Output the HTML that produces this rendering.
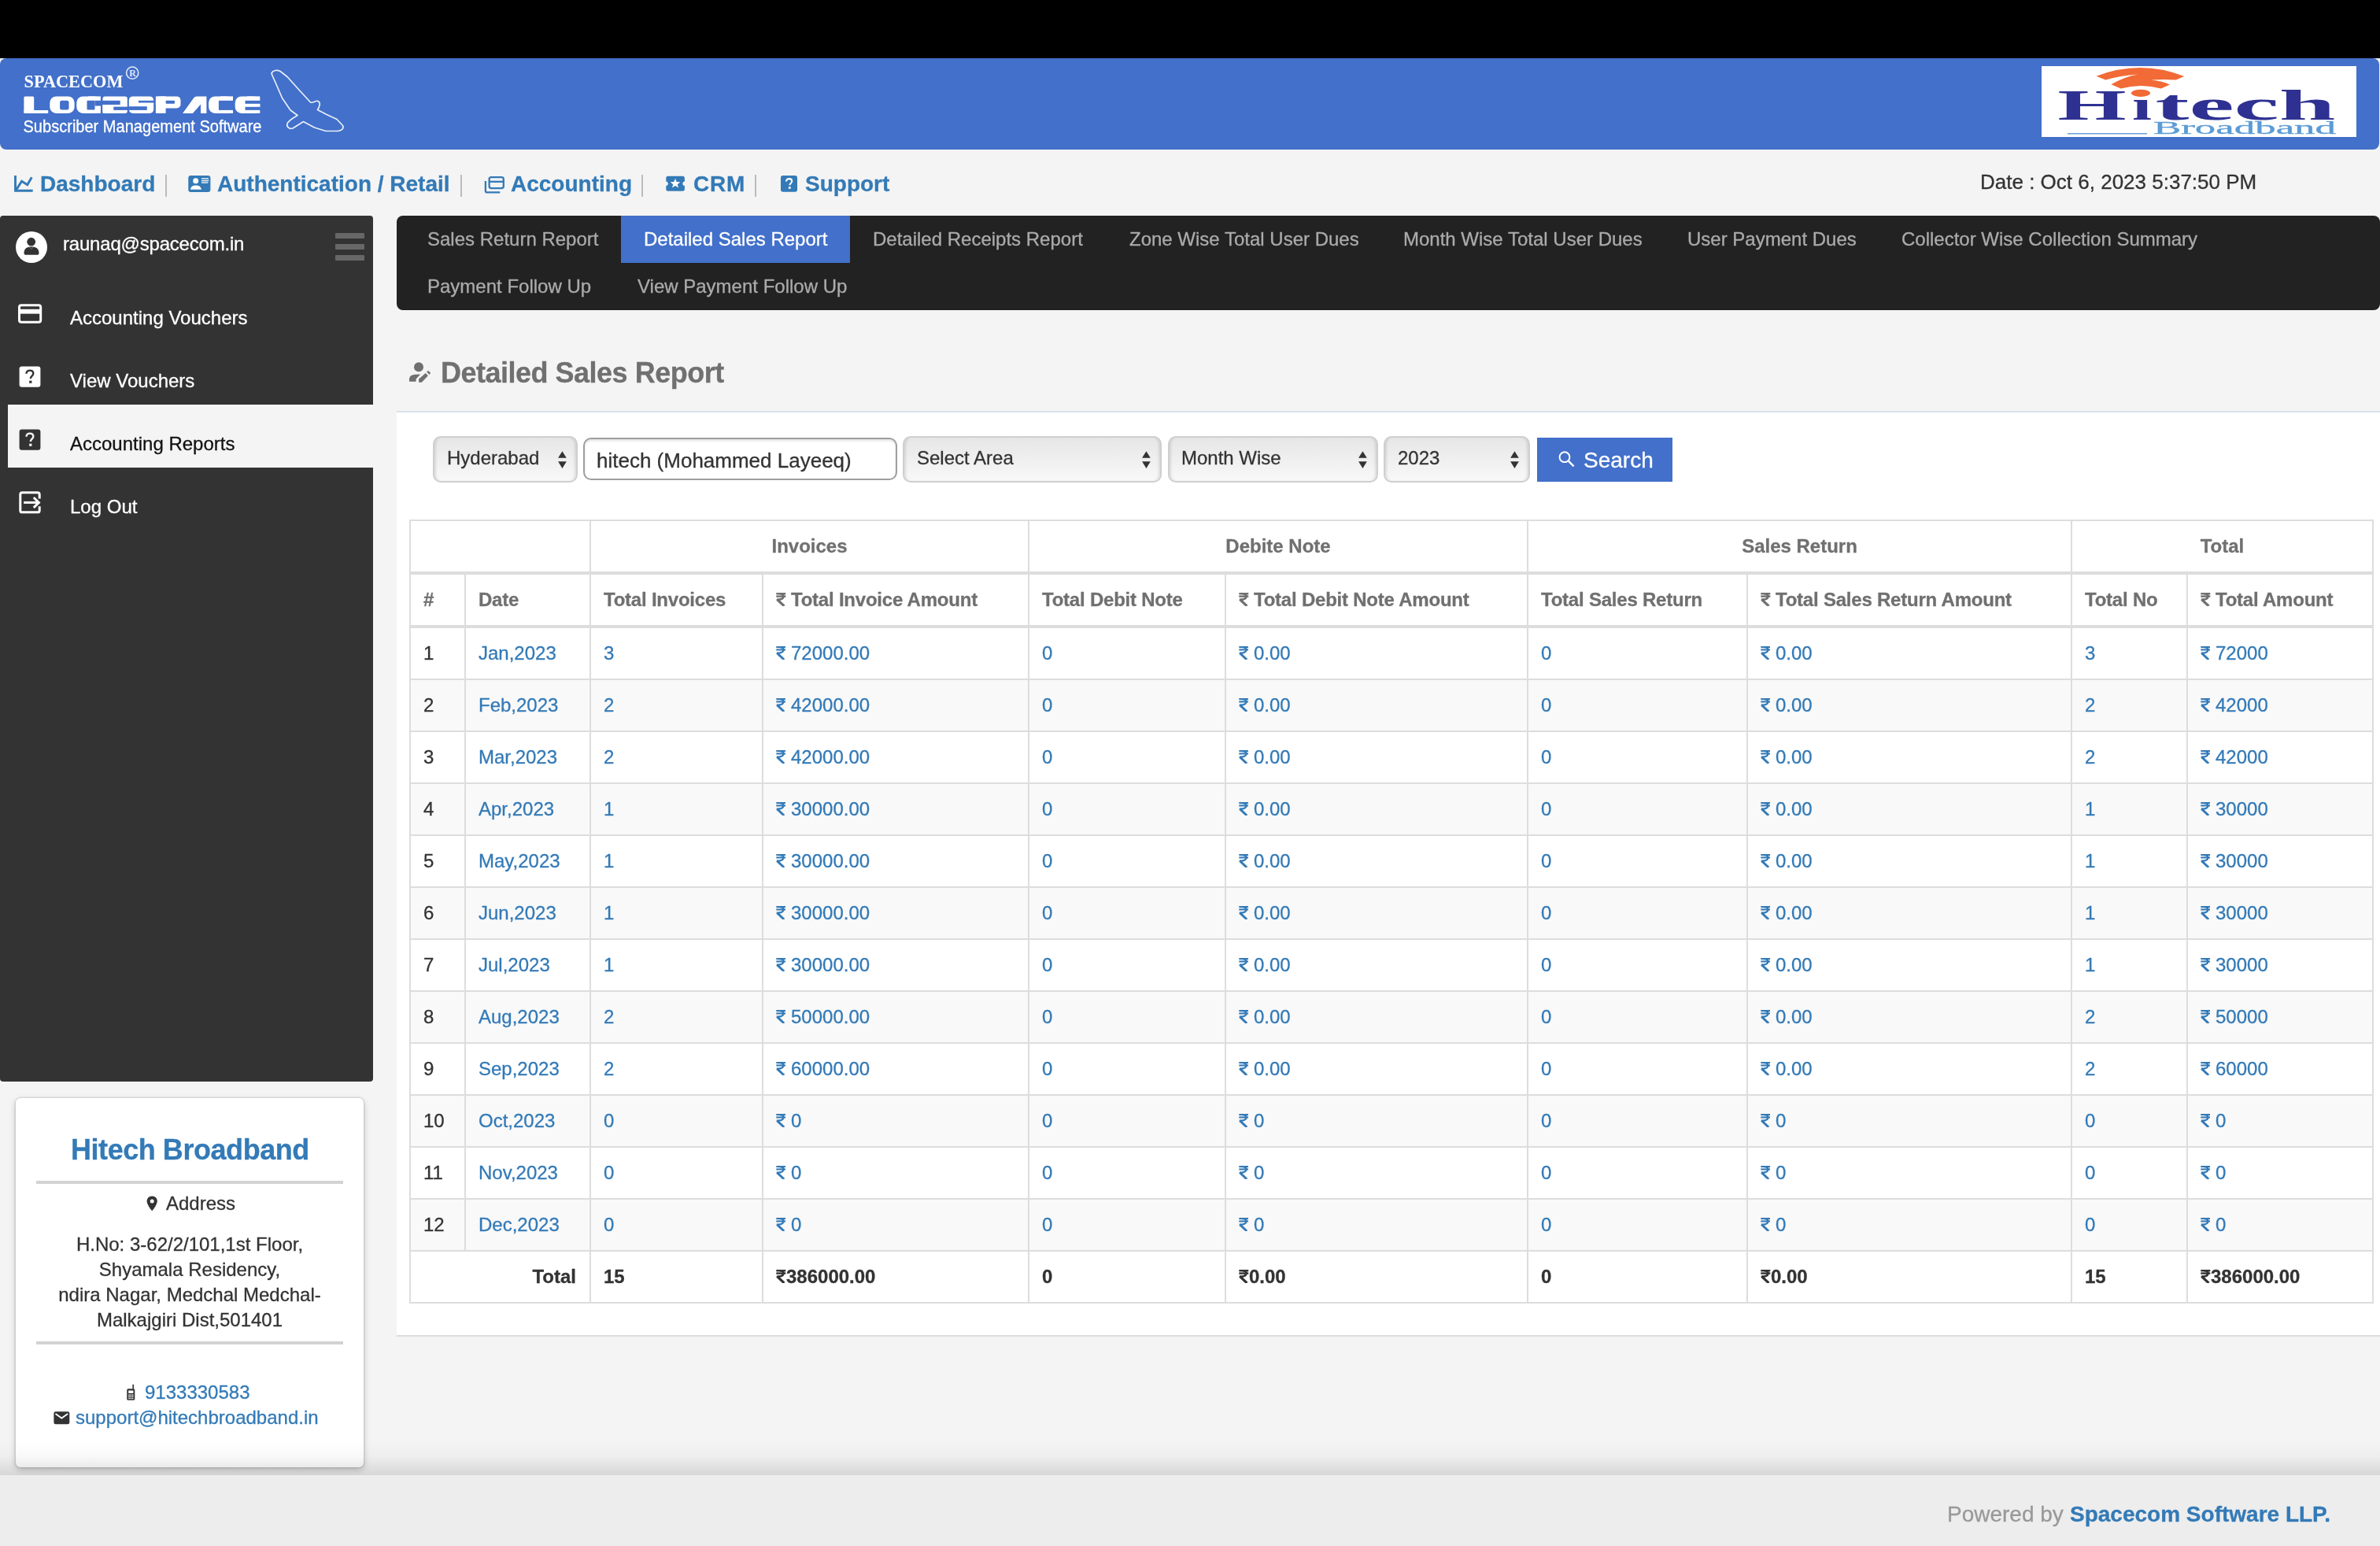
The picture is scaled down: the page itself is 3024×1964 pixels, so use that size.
<!DOCTYPE html>
<html><head><meta charset="utf-8"><title>Detailed Sales Report</title>
<style>
html,body{margin:0;padding:0;}
body{width:3024px;height:1964px;overflow:hidden;position:relative;background:#f4f4f4;font-family:"Liberation Sans", sans-serif;}
.t{position:absolute;white-space:nowrap;line-height:1;will-change:transform;-webkit-text-stroke:0.3px currentColor;}
.r{position:absolute;}
.s{position:absolute;overflow:visible;will-change:transform;}
.rs,.rsb{display:inline-block;width:13px;height:17px;vertical-align:0;margin-right:6px;}
</style></head><body>
<svg width="0" height="0" style="position:absolute">
<defs>
<symbol id="r" viewBox="0 0 13 17"><g fill="none" stroke="currentColor" stroke-linecap="butt">
<path d="M0.3 1.05H12" stroke-width="2.1"/><path d="M0.3 4.45H12" stroke-width="2.1"/>
<path d="M4.5 1.05C8.8 1.05 9.7 3.2 9.3 5.2C8.7 8 5.5 8.7 0.8 8.7" stroke-width="2.3"/>
<path d="M1.3 8.6L10.2 17" stroke-width="2.9"/></g></symbol>
<symbol id="rb" viewBox="0 0 13 17"><g fill="none" stroke="currentColor" stroke-linecap="butt">
<path d="M0.3 1.2H12.3" stroke-width="2.4"/><path d="M0.3 4.6H12.3" stroke-width="2.4"/>
<path d="M4.5 1.2C8.8 1.2 9.8 3.2 9.4 5.2C8.8 8 5.5 8.8 0.8 8.8" stroke-width="2.7"/>
<path d="M1.5 8.6L10.4 17" stroke-width="3.2"/></g></symbol>
</defs></svg>

<div class="r" style="left:0px;top:0px;width:3024px;height:74px;background:#000;"></div>
<div class="r" style="left:0px;top:74px;width:3023px;height:116px;background:#4270ca;border-radius:8px;"></div>
<svg class="s" style="left:0;top:74px" width="460" height="116" viewBox="0 74 460 116">
<g fill="#fff">
<text x="30.5" y="111.2" font-family="Liberation Serif" font-weight="bold" font-size="23.5" textLength="126" lengthAdjust="spacingAndGlyphs">SPACECOM</text>
</g><g fill="#fff">
<rect x="30.4" y="122.4" width="12.8" height="21.5" rx="1.5"/><rect x="30.4" y="139.9" width="30.9" height="4" rx="1"/>
<rect x="63.3" y="122.4" width="31.3" height="21.5" rx="8"/>
<rect x="97.3" y="122.4" width="30.6" height="21.5" rx="8"/><rect x="112" y="122.4" width="15.9" height="21.5"/>
<rect x="130.5" y="122.4" width="31.3" height="21.5" rx="3"/><rect x="130.5" y="131" width="10" height="12.9"/>
<rect x="163.8" y="122.4" width="31.4" height="21.5" rx="5"/>
<rect x="197.9" y="122.4" width="31.6" height="15" rx="5"/><rect x="197.9" y="122.4" width="12.7" height="21.5"/>
<path d="M232.1 143.9L246.5 124Q247.5 122.4 250 122.4H262.4V143.9H255V132.5L244.9 143.9Z"/>
<rect x="265.1" y="122.4" width="30.9" height="21.5" rx="8"/><rect x="280" y="122.4" width="16" height="21.5"/>
<rect x="298.7" y="122.4" width="31.6" height="21.5" rx="8"/><rect x="314" y="122.4" width="16.3" height="21.5"/>
</g><g fill="#4270ca">
<rect x="76.1" y="127.8" width="11.4" height="11.7" rx="2.5"/>
<rect x="110.5" y="127.8" width="10" height="11.7" rx="1"/><rect x="120.5" y="127.8" width="8" height="6.7"/>
<rect x="129.5" y="127.8" width="23.2" height="5.2"/><rect x="144.3" y="135.6" width="18.5" height="4.3"/>
<rect x="176" y="127.8" width="20" height="2.7"/><rect x="162.8" y="135.2" width="24" height="4.7"/>
<rect x="210.6" y="127.8" width="11.4" height="4" rx="1"/>
<rect x="277.9" y="127.8" width="19" height="12.1"/>
<rect x="311.5" y="127.8" width="19.5" height="4"/><rect x="311.5" y="135.8" width="19.5" height="4.1"/>
</g><g fill="#fff">
<text x="29.5" y="168" font-family="Liberation Sans" font-size="21.6" textLength="303" lengthAdjust="spacingAndGlyphs" stroke="#fff" stroke-width="0.3">Subscriber Management Software</text>
</g>
<circle cx="168.2" cy="92.6" r="7.6" fill="none" stroke="#fff" stroke-width="1.6" opacity="0.85"/>
<text x="164.2" y="97.3" font-family="Liberation Serif" font-weight="bold" font-size="12" fill="#fff" opacity="0.85">R</text>
<path d="M345,93 C347,89 352,88.5 356,90.5 L365,97.5 L378,112 L394.5,130 C398,131.5 401,127 404,128.5 C408,130.5 406,135.5 403.5,139.5 L415,145.5 L428,151.5 L435.5,159.5 C437.5,163.5 433.5,166 429,166.5 L414,166.5 L399.5,162 L385.5,154.5 L372,163 C368,164.5 363.5,161 365,157 C366.5,153 373,149.5 378,146.5 L369,140 L358.5,124.5 L350.5,106 L346,96 Z" fill="none" stroke="#fff" stroke-width="1.7" opacity="0.88" stroke-linejoin="round"/>
</svg>
<div class="r" style="left:2594px;top:84px;width:400px;height:90px;background:#fff;"></div>
<svg class="s" style="left:2594px;top:84px" width="400" height="90" viewBox="2594 84 400 90">
<path d="M2663.5 96.7Q2720 75.2 2775.3 97L2764.7 101.4Q2750 100.8 2733 101.4Q2748 103 2757 107.6L2745.9 112.6Q2720.6 105.4 2694.7 112.6L2682.4 107.3Q2700 97 2716.5 94.4Q2694 96 2675.3 101.4Z" fill="#f26a36"/>
<ellipse cx="2720" cy="118.3" rx="12" ry="4.6" fill="#f26a36"/>
<text x="2614.5" y="151.5" font-family="Liberation Serif" font-weight="bold" font-size="55" fill="#2e3192" textLength="87" lengthAdjust="spacingAndGlyphs">H</text>
<text x="2709" y="151.5" font-family="Liberation Serif" font-weight="bold" font-size="55" fill="#2e3192" textLength="25" lengthAdjust="spacingAndGlyphs">&#x131;</text>
<text x="2738.5" y="151.5" font-family="Liberation Serif" font-weight="bold" font-size="55" fill="#2e3192" textLength="229" lengthAdjust="spacingAndGlyphs">tech</text>
<text x="2736" y="170.4" font-family="Liberation Serif" font-size="23.5" fill="#5b9bd5" stroke="#5b9bd5" stroke-width="0.3" textLength="232" lengthAdjust="spacingAndGlyphs">Broadband</text>
<rect x="2627" y="169" width="101" height="1.5" fill="#6aa0d8"/>
</svg>
<svg class="s" style="left:14px;top:219px;" width="32" height="30" viewBox="0 0 32 30"><g fill="none" stroke="#337ab7" stroke-width="2.9" stroke-linejoin="miter"><path d="M5.5 4V23.2H27.7"/><path d="M6.7 22L13.6 11.3L20.8 15.7L26.3 6.3"/></g></svg>
<div class="t" style="left:50.50px;top:220.30px;font-size:28px;color:#337ab7;font-weight:bold;">Dashboard</div>
<div class="r" style="left:210px;top:221.5px;width:2px;height:28px;background:#bbb;"></div>
<svg class="s" style="left:239px;top:223px;" width="29" height="21" viewBox="0 0 29 21"><rect x="0.3" y="0" width="28.1" height="20.9" rx="3.2" fill="#337ab7"/><circle cx="9.7" cy="6.8" r="3.5" fill="#fff"/><path d="M2.8 17.8C3.5 13.5 6.5 12.4 9.8 12.4C13.1 12.4 16.2 13.5 17 17.8Z" fill="#fff"/><rect x="17" y="3.1" width="9" height="1.8" fill="#fff" opacity=".75"/><rect x="17" y="6" width="9.2" height="1.3" fill="#fff"/><rect x="17" y="8.3" width="8.3" height="1.5" fill="#fff" opacity=".85"/></svg>
<div class="t" style="left:275.80px;top:220.30px;font-size:28px;color:#337ab7;font-weight:bold;">Authentication / Retail</div>
<div class="r" style="left:585px;top:221.5px;width:2px;height:28px;background:#bbb;"></div>
<svg class="s" style="left:614px;top:222px;" width="30" height="25" viewBox="0 0 30 25"><g fill="none" stroke="#337ab7" stroke-width="2.3"><rect x="7.6" y="3.2" width="18.2" height="14" rx="2.6"/><path d="M7.6 8.8H25.8"/><path d="M2.9 8.1V20.4C2.9 21.6 3.7 22.4 4.9 22.4H21.3"/></g></svg>
<div class="t" style="left:648.50px;top:220.30px;font-size:28px;color:#337ab7;font-weight:bold;">Accounting</div>
<div class="r" style="left:815px;top:221.5px;width:2px;height:28px;background:#bbb;"></div>
<svg class="s" style="left:846px;top:223px;" width="25" height="21" viewBox="0 0 25 21"><path d="M2.5 0.8H21.5C22.9 0.8 23.9 1.8 23.9 3.2V7.4C22.3 7.6 21.3 8.7 21.3 10.2C21.3 11.7 22.3 12.8 23.9 13V17.3C23.9 18.7 22.9 19.7 21.5 19.7H2.5C1.1 19.7 0.3 18.7 0.3 17.3V13C1.9 12.8 2.9 11.7 2.9 10.2C2.9 8.7 1.9 7.6 0.3 7.4V3.2C0.3 1.8 1.1 0.8 2.5 0.8Z" fill="#337ab7"/><path d="M12 3.8L13.7 8.1L18.3 8.3L14.8 11.2L16 15.6L12 13.1L8 15.6L9.2 11.2L5.7 8.3L10.3 8.1Z" fill="#fff"/></svg>
<div class="t" style="left:880.50px;top:220.30px;font-size:28px;color:#337ab7;font-weight:bold;letter-spacing:0.8px;">CRM</div>
<div class="r" style="left:959px;top:221.5px;width:2px;height:28px;background:#bbb;"></div>
<svg class="s" style="left:992px;top:223px;" width="22" height="22" viewBox="0 0 22 22"><rect x="0" y="0" width="21" height="20.8" rx="2.8" fill="#337ab7"/><path d="M7 7.4C7 5.3 8.5 4.1 10.6 4.1C12.7 4.1 14.2 5.3 14.2 7.2C14.2 9.5 11.4 9.8 11.4 12.2" fill="none" stroke="#fff" stroke-width="2.1"/><rect x="9.9" y="14.2" width="2.8" height="2.6" fill="#fff"/></svg>
<div class="t" style="left:1023.00px;top:220.30px;font-size:28px;color:#337ab7;font-weight:bold;">Support</div>
<div class="t" style="left:2515.50px;top:217.99px;font-size:26px;color:#333;">Date : Oct 6, 2023 5:37:50 PM</div>
<div class="r" style="left:0px;top:274px;width:474px;height:1100px;background:#333;border-radius:4px;"></div>
<svg class="s" style="left:20px;top:294px;" width="40" height="40" viewBox="0 0 40 40"><circle cx="20" cy="20" r="20" fill="#fff"/><circle cx="19.7" cy="13.2" r="5.4" fill="#333"/><path d="M10.5 27.5C10.5 21.8 14.2 19.6 20 19.6C25.8 19.6 29.5 21.8 29.5 27.5C29.5 29 28.6 29.8 27 29.8H13C11.4 29.8 10.5 29 10.5 27.5Z" fill="#333"/><path d="M17 19.6L19.8 22.6L22.6 19.6" fill="none" stroke="#888" stroke-width="0.7"/></svg>
<div class="t" style="left:79.50px;top:297.58px;font-size:24px;color:#fff;letter-spacing:-0.2px;">raunaq@spacecom.in</div>
<div class="r" style="left:425.5px;top:295.5px;width:37px;height:7px;background:#676767;border-radius:1px;"></div>
<div class="r" style="left:425.5px;top:309.5px;width:37px;height:7px;background:#676767;border-radius:1px;"></div>
<div class="r" style="left:425.5px;top:323.5px;width:37px;height:7px;background:#676767;border-radius:1px;"></div>
<div class="t" style="left:88.80px;top:391.68px;font-size:24px;color:#fff;">Accounting Vouchers</div>
<div class="t" style="left:88.80px;top:471.68px;font-size:24px;color:#fff;">View Vouchers</div>
<div class="r" style="left:10px;top:514px;width:464px;height:80px;background:#f4f4f4;"></div>
<div class="t" style="left:88.80px;top:551.68px;font-size:24px;color:#111;">Accounting Reports</div>
<div class="t" style="left:88.80px;top:631.68px;font-size:24px;color:#fff;">Log Out</div>
<svg class="s" style="left:23px;top:386px;" width="31" height="25" viewBox="0 0 31 25"><g fill="none" stroke="#fff" stroke-width="3"><rect x="1.5" y="1.8" width="27.2" height="21.5" rx="2.6"/></g><rect x="2" y="6.8" width="26.5" height="5.8" fill="#fff"/></svg>
<svg class="s" style="left:24px;top:465px;" width="28" height="27" viewBox="0 0 28 27"><rect x="0.6" y="0.4" width="26.8" height="26.4" rx="3" fill="#fff"/><path d="M9.5 9.8C9.5 7.2 11.3 5.6 13.9 5.6C16.5 5.6 18.3 7.1 18.3 9.4C18.3 12.4 14.8 12.7 14.8 16" fill="none" stroke="#333" stroke-width="2.4"/><rect x="13.2" y="18.6" width="3.2" height="3.2" fill="#333"/></svg>
<svg class="s" style="left:24px;top:545px;" width="28" height="27" viewBox="0 0 28 27"><rect x="0.6" y="0.4" width="26.8" height="26.4" rx="3" fill="#333"/><path d="M9.5 9.8C9.5 7.2 11.3 5.6 13.9 5.6C16.5 5.6 18.3 7.1 18.3 9.4C18.3 12.4 14.8 12.7 14.8 16" fill="none" stroke="#f4f4f4" stroke-width="2.4"/><rect x="13.2" y="18.6" width="3.2" height="3.2" fill="#f4f4f4"/></svg>
<svg class="s" style="left:24px;top:624px;" width="29" height="29" viewBox="0 0 29 29"><g fill="none" stroke="#fff" stroke-width="3"><path d="M26.2 9.4V4.2C26.2 2.6 25.4 1.8 23.8 1.8H4.2C2.6 1.8 1.8 2.6 1.8 4.2V24.4C1.8 26 2.6 26.8 4.2 26.8H23.8C25.4 26.8 26.2 26 26.2 24.4V19.2"/><path d="M6.2 14.4H25.2"/><path d="M18.8 8L25.4 14.4L18.8 20.8"/></g></svg>
<div class="r" style="left:20px;top:1395px;width:442px;height:469px;background:#fff;border-radius:6px;box-shadow:0 0 0 1.5px rgba(0,0,0,0.07),0 3px 8px rgba(0,0,0,0.22);"></div>
<div class="t" style="left:89.50px;top:1443.03px;font-size:36px;color:#337ab7;font-weight:bold;letter-spacing:-0.45px;">Hitech Broadband</div>
<div class="r" style="left:46px;top:1500px;width:390px;height:4px;background:#d3d3d3;"></div>
<svg class="s" style="left:186px;top:1519px;" width="15" height="20" viewBox="0 0 15 20"><path d="M7.2 0.6C3.5 0.6 0.6 3.4 0.6 7C0.6 11.5 7.2 19.4 7.2 19.4C7.2 19.4 13.8 11.5 13.8 7C13.8 3.4 10.9 0.6 7.2 0.6Z" fill="#333"/><circle cx="7.2" cy="6.9" r="2.5" fill="#fff"/></svg>
<div class="t" style="left:211.00px;top:1517.38px;font-size:24px;color:#333;">Address</div>
<div class="t" style="left:20px;width:442px;text-align:center;top:1569.08px;font-size:24px;color:#333;">H.No: 3-62/2/101,1st Floor,</div>
<div class="t" style="left:20px;width:442px;text-align:center;top:1601.08px;font-size:24px;color:#333;">Shyamala Residency,</div>
<div class="t" style="left:20px;width:442px;text-align:center;top:1633.08px;font-size:24px;color:#333;">ndira Nagar, Medchal Medchal-</div>
<div class="t" style="left:20px;width:442px;text-align:center;top:1665.08px;font-size:24px;color:#333;">Malkajgiri Dist,501401</div>
<div class="r" style="left:46px;top:1704px;width:390px;height:4px;background:#d3d3d3;"></div>
<svg class="s" style="left:160px;top:1758px;" width="13" height="22" viewBox="0 0 13 22"><rect x="1.3" y="6.2" width="10" height="14.6" rx="1.6" fill="#333"/><rect x="8.4" y="0.8" width="1.6" height="6" fill="#333"/><g fill="#fff"><rect x="3.2" y="8.5" width="6.2" height="3.4"/><rect x="3.2" y="13.4" width="1.6" height="1.4"/><rect x="5.5" y="13.4" width="1.6" height="1.4"/><rect x="7.8" y="13.4" width="1.6" height="1.4"/><rect x="3.2" y="15.6" width="1.6" height="1.4"/><rect x="5.5" y="15.6" width="1.6" height="1.4"/><rect x="7.8" y="15.6" width="1.6" height="1.4"/><rect x="3.2" y="17.8" width="1.6" height="1.4"/><rect x="5.5" y="17.8" width="1.6" height="1.4"/><rect x="7.8" y="17.8" width="1.6" height="1.4"/></g></svg>
<div class="t" style="left:183.50px;top:1757.18px;font-size:24px;color:#337ab7;">9133330583</div>
<svg class="s" style="left:68px;top:1793px;" width="21" height="17" viewBox="0 0 21 17"><rect x="0.4" y="0.3" width="19.9" height="15.9" rx="2.2" fill="#333"/><path d="M2.5 3L10.35 8.6L18.2 3" fill="none" stroke="#fff" stroke-width="1.8"/></svg>
<div class="t" style="left:96.00px;top:1789.18px;font-size:24px;color:#337ab7;">support@hitechbroadband.in</div>
<div class="r" style="left:0px;top:1830px;width:3024px;height:44px;background:linear-gradient(to bottom, rgba(0,0,0,0) 0%, rgba(0,0,0,0.025) 45%, rgba(0,0,0,0.12) 100%);"></div>
<div class="r" style="left:0px;top:1874px;width:3024px;height:90px;background:#ededed;"></div>
<div class="t" style="left:2474.00px;top:1910.30px;font-size:28px;color:#999;">Powered by </div>
<div class="t" style="left:2629.70px;top:1910.30px;font-size:28px;color:#337ab7;font-weight:bold;">Spacecom Software LLP.</div>
<div class="r" style="left:504px;top:274px;width:2520px;height:120px;background:#222;border-radius:8px;"></div>
<div class="r" style="left:789px;top:274px;width:291px;height:60px;background:#4270ca;"></div>
<div class="t" style="left:543.00px;top:291.68px;font-size:24px;color:#ababab;">Sales Return Report</div>
<div class="t" style="left:818.00px;top:291.68px;font-size:24px;color:#fff;">Detailed Sales Report</div>
<div class="t" style="left:1109.00px;top:291.68px;font-size:24px;color:#ababab;">Detailed Receipts Report</div>
<div class="t" style="left:1435.00px;top:291.68px;font-size:24px;color:#ababab;">Zone Wise Total User Dues</div>
<div class="t" style="left:1782.50px;top:291.68px;font-size:24px;color:#ababab;">Month Wise Total User Dues</div>
<div class="t" style="left:2144.00px;top:291.68px;font-size:24px;color:#ababab;">User Payment Dues</div>
<div class="t" style="left:2416.00px;top:291.68px;font-size:24px;color:#ababab;">Collector Wise Collection Summary</div>
<div class="t" style="left:543.00px;top:351.68px;font-size:24px;color:#ababab;">Payment Follow Up</div>
<div class="t" style="left:810.00px;top:351.68px;font-size:24px;color:#ababab;">View Payment Follow Up</div>
<svg class="s" style="left:518px;top:458px;" width="32" height="30" viewBox="0 0 32 30"><circle cx="14" cy="8.2" r="6" fill="#707070"/><path d="M1.9 26.8L2.1 22.5C2.8 19.5 5.5 17.9 9.5 17.7L16.2 17.6L10.6 23.6V26.8Z" fill="#707070"/><path d="M14.1 23.6V27.8H17.8L25.9 19.3L22.7 16.1Z" fill="#707070"/><path d="M24 14.2L26.4 13.1L29.1 15.7L27.6 17.9Z" fill="#707070"/></svg>
<div class="t" style="left:559.50px;top:455.83px;font-size:36px;color:#707070;font-weight:bold;letter-spacing:-0.5px;">Detailed Sales Report</div>
<div class="r" style="left:504px;top:522px;width:2520px;height:1176px;background:#fff;border-top:2px solid #d8e2ee;border-bottom:2px solid #ddd;box-sizing:border-box;"></div>
<div class="r" style="left:550px;top:554px;width:184px;height:59px;box-sizing:border-box;border:2px solid #cfcfcf;border-radius:10px;background:linear-gradient(#e6e6e6,#f3f3f3 70%,#f8f8f8);box-shadow:inset 4px 0 3px -2px rgba(0,0,0,0.10),inset -4px 0 3px -2px rgba(0,0,0,0.10);"></div>
<div class="t" style="left:567.50px;top:570.38px;font-size:24px;color:#333;">Hyderabad</div>
<svg class="s" style="left:709px;top:572px;" width="12" height="24" viewBox="0 0 12 24"><path d="M0.1 9.8L5.45 1.2L10.8 9.8Z" fill="#333"/><path d="M0.1 14.2L5.45 22.9L10.8 14.2Z" fill="#333"/></svg>
<div class="r" style="left:741px;top:556px;width:399px;height:54px;box-sizing:border-box;border:2px solid #9e9e9e;border-radius:10px;background:#fff;box-shadow:inset 0 2px 3px rgba(0,0,0,0.12);"></div>
<div class="t" style="left:757.50px;top:571.99px;font-size:26px;color:#333;">hitech (Mohammed Layeeq)</div>
<div class="r" style="left:1147px;top:554px;width:329px;height:59px;box-sizing:border-box;border:2px solid #cfcfcf;border-radius:10px;background:linear-gradient(#e6e6e6,#f3f3f3 70%,#f8f8f8);box-shadow:inset 4px 0 3px -2px rgba(0,0,0,0.10),inset -4px 0 3px -2px rgba(0,0,0,0.10);"></div>
<div class="t" style="left:1164.50px;top:570.38px;font-size:24px;color:#333;">Select Area</div>
<svg class="s" style="left:1451px;top:572px;" width="12" height="24" viewBox="0 0 12 24"><path d="M0.1 9.8L5.45 1.2L10.8 9.8Z" fill="#333"/><path d="M0.1 14.2L5.45 22.9L10.8 14.2Z" fill="#333"/></svg>
<div class="r" style="left:1484px;top:554px;width:267px;height:59px;box-sizing:border-box;border:2px solid #cfcfcf;border-radius:10px;background:linear-gradient(#e6e6e6,#f3f3f3 70%,#f8f8f8);box-shadow:inset 4px 0 3px -2px rgba(0,0,0,0.10),inset -4px 0 3px -2px rgba(0,0,0,0.10);"></div>
<div class="t" style="left:1501.00px;top:570.38px;font-size:24px;color:#333;">Month Wise</div>
<svg class="s" style="left:1726px;top:572px;" width="12" height="24" viewBox="0 0 12 24"><path d="M0.1 9.8L5.45 1.2L10.8 9.8Z" fill="#333"/><path d="M0.1 14.2L5.45 22.9L10.8 14.2Z" fill="#333"/></svg>
<div class="r" style="left:1758px;top:554px;width:186px;height:59px;box-sizing:border-box;border:2px solid #cfcfcf;border-radius:10px;background:linear-gradient(#e6e6e6,#f3f3f3 70%,#f8f8f8);box-shadow:inset 4px 0 3px -2px rgba(0,0,0,0.10),inset -4px 0 3px -2px rgba(0,0,0,0.10);"></div>
<div class="t" style="left:1775.50px;top:570.38px;font-size:24px;color:#333;">2023</div>
<svg class="s" style="left:1919px;top:572px;" width="12" height="24" viewBox="0 0 12 24"><path d="M0.1 9.8L5.45 1.2L10.8 9.8Z" fill="#333"/><path d="M0.1 14.2L5.45 22.9L10.8 14.2Z" fill="#333"/></svg>
<div class="r" style="left:1953px;top:556px;width:172px;height:56px;background:#4270ca;"></div>
<svg class="s" style="left:1978px;top:570px;" width="26" height="26" viewBox="0 0 26 26"><circle cx="10" cy="10.7" r="6.4" fill="none" stroke="#fff" stroke-width="2"/><path d="M14.6 15.4L21.6 22.4" stroke="#fff" stroke-width="2.4"/></svg>
<div class="t" style="left:2011.50px;top:570.50px;font-size:28px;color:#fff;">Search</div>
<div class="r" style="left:522px;top:864px;width:2492px;height:64px;background:#f9f9f9;"></div>
<div class="r" style="left:522px;top:996px;width:2492px;height:64px;background:#f9f9f9;"></div>
<div class="r" style="left:522px;top:1128px;width:2492px;height:64px;background:#f9f9f9;"></div>
<div class="r" style="left:522px;top:1260px;width:2492px;height:64px;background:#f9f9f9;"></div>
<div class="r" style="left:522px;top:1392px;width:2492px;height:64px;background:#f9f9f9;"></div>
<div class="r" style="left:522px;top:1524px;width:2492px;height:64px;background:#f9f9f9;"></div>
<div class="r" style="left:520px;top:660px;width:2496px;height:2px;background:#dddddd;"></div>
<div class="r" style="left:520px;top:726px;width:2496px;height:4px;background:#dddddd;"></div>
<div class="r" style="left:520px;top:794px;width:2496px;height:4px;background:#dddddd;"></div>
<div class="r" style="left:520px;top:862px;width:2496px;height:2px;background:#dddddd;"></div>
<div class="r" style="left:520px;top:928px;width:2496px;height:2px;background:#dddddd;"></div>
<div class="r" style="left:520px;top:994px;width:2496px;height:2px;background:#dddddd;"></div>
<div class="r" style="left:520px;top:1060px;width:2496px;height:2px;background:#dddddd;"></div>
<div class="r" style="left:520px;top:1126px;width:2496px;height:2px;background:#dddddd;"></div>
<div class="r" style="left:520px;top:1192px;width:2496px;height:2px;background:#dddddd;"></div>
<div class="r" style="left:520px;top:1258px;width:2496px;height:2px;background:#dddddd;"></div>
<div class="r" style="left:520px;top:1324px;width:2496px;height:2px;background:#dddddd;"></div>
<div class="r" style="left:520px;top:1390px;width:2496px;height:2px;background:#dddddd;"></div>
<div class="r" style="left:520px;top:1456px;width:2496px;height:2px;background:#dddddd;"></div>
<div class="r" style="left:520px;top:1522px;width:2496px;height:2px;background:#dddddd;"></div>
<div class="r" style="left:520px;top:1588px;width:2496px;height:2px;background:#dddddd;"></div>
<div class="r" style="left:520px;top:1654px;width:2496px;height:2px;background:#dddddd;"></div>
<div class="r" style="left:520px;top:660px;width:2px;height:996px;background:#dddddd;"></div>
<div class="r" style="left:3014px;top:660px;width:2px;height:996px;background:#dddddd;"></div>
<div class="r" style="left:749px;top:660px;width:2px;height:996px;background:#dddddd;"></div>
<div class="r" style="left:1306px;top:660px;width:2px;height:996px;background:#dddddd;"></div>
<div class="r" style="left:1940px;top:660px;width:2px;height:996px;background:#dddddd;"></div>
<div class="r" style="left:2631px;top:660px;width:2px;height:996px;background:#dddddd;"></div>
<div class="r" style="left:590px;top:726px;width:2px;height:864px;background:#dddddd;"></div>
<div class="r" style="left:968px;top:726px;width:2px;height:864px;background:#dddddd;"></div>
<div class="r" style="left:1556px;top:726px;width:2px;height:864px;background:#dddddd;"></div>
<div class="r" style="left:2219px;top:726px;width:2px;height:864px;background:#dddddd;"></div>
<div class="r" style="left:2778px;top:726px;width:2px;height:864px;background:#dddddd;"></div>
<div class="r" style="left:968px;top:1590px;width:2px;height:66px;background:#dddddd;"></div>
<div class="r" style="left:1556px;top:1590px;width:2px;height:66px;background:#dddddd;"></div>
<div class="r" style="left:2219px;top:1590px;width:2px;height:66px;background:#dddddd;"></div>
<div class="r" style="left:2778px;top:1590px;width:2px;height:66px;background:#dddddd;"></div>
<div class="t" style="left:750px;width:557px;text-align:center;top:681.68px;font-size:24px;font-weight:bold;color:#707070;">Invoices</div>
<div class="t" style="left:1307px;width:634px;text-align:center;top:681.68px;font-size:24px;font-weight:bold;color:#707070;">Debite Note</div>
<div class="t" style="left:1941px;width:691px;text-align:center;top:681.68px;font-size:24px;font-weight:bold;color:#707070;">Sales Return</div>
<div class="t" style="left:2632px;width:383px;text-align:center;top:681.68px;font-size:24px;font-weight:bold;color:#707070;">Total</div>
<div class="t" style="left:538px;top:749.98px;font-size:24px;color:#707070;font-weight:bold;letter-spacing:-0.22px;">#</div>
<div class="t" style="left:608px;top:749.98px;font-size:24px;color:#707070;font-weight:bold;letter-spacing:-0.22px;">Date</div>
<div class="t" style="left:767px;top:749.98px;font-size:24px;color:#707070;font-weight:bold;letter-spacing:-0.22px;">Total Invoices</div>
<div class="t" style="left:986px;top:749.98px;font-size:24px;color:#707070;font-weight:bold;letter-spacing:-0.22px;"><svg class="rsb" viewBox="0 0 13 17"><use href="#rb"/></svg>Total Invoice Amount</div>
<div class="t" style="left:1324px;top:749.98px;font-size:24px;color:#707070;font-weight:bold;letter-spacing:-0.22px;">Total Debit Note</div>
<div class="t" style="left:1574px;top:749.98px;font-size:24px;color:#707070;font-weight:bold;letter-spacing:-0.22px;"><svg class="rsb" viewBox="0 0 13 17"><use href="#rb"/></svg>Total Debit Note Amount</div>
<div class="t" style="left:1958px;top:749.98px;font-size:24px;color:#707070;font-weight:bold;letter-spacing:-0.22px;">Total Sales Return</div>
<div class="t" style="left:2237px;top:749.98px;font-size:24px;color:#707070;font-weight:bold;letter-spacing:-0.22px;"><svg class="rsb" viewBox="0 0 13 17"><use href="#rb"/></svg>Total Sales Return Amount</div>
<div class="t" style="left:2649px;top:749.98px;font-size:24px;color:#707070;font-weight:bold;letter-spacing:-0.22px;">Total No</div>
<div class="t" style="left:2796px;top:749.98px;font-size:24px;color:#707070;font-weight:bold;letter-spacing:-0.22px;"><svg class="rsb" viewBox="0 0 13 17"><use href="#rb"/></svg>Total Amount</div>
<div class="t" style="left:538px;top:817.68px;font-size:24px;color:#333;">1</div>
<div class="t" style="left:608px;top:817.68px;font-size:24px;color:#337ab7;">Jan,2023</div>
<div class="t" style="left:767px;top:817.68px;font-size:24px;color:#337ab7;">3</div>
<div class="t" style="left:986px;top:817.68px;font-size:24px;color:#337ab7;"><svg class="rs" viewBox="0 0 13 17"><use href="#r"/></svg>72000.00</div>
<div class="t" style="left:1324px;top:817.68px;font-size:24px;color:#337ab7;">0</div>
<div class="t" style="left:1574px;top:817.68px;font-size:24px;color:#337ab7;"><svg class="rs" viewBox="0 0 13 17"><use href="#r"/></svg>0.00</div>
<div class="t" style="left:1958px;top:817.68px;font-size:24px;color:#337ab7;">0</div>
<div class="t" style="left:2237px;top:817.68px;font-size:24px;color:#337ab7;"><svg class="rs" viewBox="0 0 13 17"><use href="#r"/></svg>0.00</div>
<div class="t" style="left:2649px;top:817.68px;font-size:24px;color:#337ab7;">3</div>
<div class="t" style="left:2796px;top:817.68px;font-size:24px;color:#337ab7;"><svg class="rs" viewBox="0 0 13 17"><use href="#r"/></svg>72000</div>
<div class="t" style="left:538px;top:883.68px;font-size:24px;color:#333;">2</div>
<div class="t" style="left:608px;top:883.68px;font-size:24px;color:#337ab7;">Feb,2023</div>
<div class="t" style="left:767px;top:883.68px;font-size:24px;color:#337ab7;">2</div>
<div class="t" style="left:986px;top:883.68px;font-size:24px;color:#337ab7;"><svg class="rs" viewBox="0 0 13 17"><use href="#r"/></svg>42000.00</div>
<div class="t" style="left:1324px;top:883.68px;font-size:24px;color:#337ab7;">0</div>
<div class="t" style="left:1574px;top:883.68px;font-size:24px;color:#337ab7;"><svg class="rs" viewBox="0 0 13 17"><use href="#r"/></svg>0.00</div>
<div class="t" style="left:1958px;top:883.68px;font-size:24px;color:#337ab7;">0</div>
<div class="t" style="left:2237px;top:883.68px;font-size:24px;color:#337ab7;"><svg class="rs" viewBox="0 0 13 17"><use href="#r"/></svg>0.00</div>
<div class="t" style="left:2649px;top:883.68px;font-size:24px;color:#337ab7;">2</div>
<div class="t" style="left:2796px;top:883.68px;font-size:24px;color:#337ab7;"><svg class="rs" viewBox="0 0 13 17"><use href="#r"/></svg>42000</div>
<div class="t" style="left:538px;top:949.68px;font-size:24px;color:#333;">3</div>
<div class="t" style="left:608px;top:949.68px;font-size:24px;color:#337ab7;">Mar,2023</div>
<div class="t" style="left:767px;top:949.68px;font-size:24px;color:#337ab7;">2</div>
<div class="t" style="left:986px;top:949.68px;font-size:24px;color:#337ab7;"><svg class="rs" viewBox="0 0 13 17"><use href="#r"/></svg>42000.00</div>
<div class="t" style="left:1324px;top:949.68px;font-size:24px;color:#337ab7;">0</div>
<div class="t" style="left:1574px;top:949.68px;font-size:24px;color:#337ab7;"><svg class="rs" viewBox="0 0 13 17"><use href="#r"/></svg>0.00</div>
<div class="t" style="left:1958px;top:949.68px;font-size:24px;color:#337ab7;">0</div>
<div class="t" style="left:2237px;top:949.68px;font-size:24px;color:#337ab7;"><svg class="rs" viewBox="0 0 13 17"><use href="#r"/></svg>0.00</div>
<div class="t" style="left:2649px;top:949.68px;font-size:24px;color:#337ab7;">2</div>
<div class="t" style="left:2796px;top:949.68px;font-size:24px;color:#337ab7;"><svg class="rs" viewBox="0 0 13 17"><use href="#r"/></svg>42000</div>
<div class="t" style="left:538px;top:1015.68px;font-size:24px;color:#333;">4</div>
<div class="t" style="left:608px;top:1015.68px;font-size:24px;color:#337ab7;">Apr,2023</div>
<div class="t" style="left:767px;top:1015.68px;font-size:24px;color:#337ab7;">1</div>
<div class="t" style="left:986px;top:1015.68px;font-size:24px;color:#337ab7;"><svg class="rs" viewBox="0 0 13 17"><use href="#r"/></svg>30000.00</div>
<div class="t" style="left:1324px;top:1015.68px;font-size:24px;color:#337ab7;">0</div>
<div class="t" style="left:1574px;top:1015.68px;font-size:24px;color:#337ab7;"><svg class="rs" viewBox="0 0 13 17"><use href="#r"/></svg>0.00</div>
<div class="t" style="left:1958px;top:1015.68px;font-size:24px;color:#337ab7;">0</div>
<div class="t" style="left:2237px;top:1015.68px;font-size:24px;color:#337ab7;"><svg class="rs" viewBox="0 0 13 17"><use href="#r"/></svg>0.00</div>
<div class="t" style="left:2649px;top:1015.68px;font-size:24px;color:#337ab7;">1</div>
<div class="t" style="left:2796px;top:1015.68px;font-size:24px;color:#337ab7;"><svg class="rs" viewBox="0 0 13 17"><use href="#r"/></svg>30000</div>
<div class="t" style="left:538px;top:1081.68px;font-size:24px;color:#333;">5</div>
<div class="t" style="left:608px;top:1081.68px;font-size:24px;color:#337ab7;">May,2023</div>
<div class="t" style="left:767px;top:1081.68px;font-size:24px;color:#337ab7;">1</div>
<div class="t" style="left:986px;top:1081.68px;font-size:24px;color:#337ab7;"><svg class="rs" viewBox="0 0 13 17"><use href="#r"/></svg>30000.00</div>
<div class="t" style="left:1324px;top:1081.68px;font-size:24px;color:#337ab7;">0</div>
<div class="t" style="left:1574px;top:1081.68px;font-size:24px;color:#337ab7;"><svg class="rs" viewBox="0 0 13 17"><use href="#r"/></svg>0.00</div>
<div class="t" style="left:1958px;top:1081.68px;font-size:24px;color:#337ab7;">0</div>
<div class="t" style="left:2237px;top:1081.68px;font-size:24px;color:#337ab7;"><svg class="rs" viewBox="0 0 13 17"><use href="#r"/></svg>0.00</div>
<div class="t" style="left:2649px;top:1081.68px;font-size:24px;color:#337ab7;">1</div>
<div class="t" style="left:2796px;top:1081.68px;font-size:24px;color:#337ab7;"><svg class="rs" viewBox="0 0 13 17"><use href="#r"/></svg>30000</div>
<div class="t" style="left:538px;top:1147.68px;font-size:24px;color:#333;">6</div>
<div class="t" style="left:608px;top:1147.68px;font-size:24px;color:#337ab7;">Jun,2023</div>
<div class="t" style="left:767px;top:1147.68px;font-size:24px;color:#337ab7;">1</div>
<div class="t" style="left:986px;top:1147.68px;font-size:24px;color:#337ab7;"><svg class="rs" viewBox="0 0 13 17"><use href="#r"/></svg>30000.00</div>
<div class="t" style="left:1324px;top:1147.68px;font-size:24px;color:#337ab7;">0</div>
<div class="t" style="left:1574px;top:1147.68px;font-size:24px;color:#337ab7;"><svg class="rs" viewBox="0 0 13 17"><use href="#r"/></svg>0.00</div>
<div class="t" style="left:1958px;top:1147.68px;font-size:24px;color:#337ab7;">0</div>
<div class="t" style="left:2237px;top:1147.68px;font-size:24px;color:#337ab7;"><svg class="rs" viewBox="0 0 13 17"><use href="#r"/></svg>0.00</div>
<div class="t" style="left:2649px;top:1147.68px;font-size:24px;color:#337ab7;">1</div>
<div class="t" style="left:2796px;top:1147.68px;font-size:24px;color:#337ab7;"><svg class="rs" viewBox="0 0 13 17"><use href="#r"/></svg>30000</div>
<div class="t" style="left:538px;top:1213.68px;font-size:24px;color:#333;">7</div>
<div class="t" style="left:608px;top:1213.68px;font-size:24px;color:#337ab7;">Jul,2023</div>
<div class="t" style="left:767px;top:1213.68px;font-size:24px;color:#337ab7;">1</div>
<div class="t" style="left:986px;top:1213.68px;font-size:24px;color:#337ab7;"><svg class="rs" viewBox="0 0 13 17"><use href="#r"/></svg>30000.00</div>
<div class="t" style="left:1324px;top:1213.68px;font-size:24px;color:#337ab7;">0</div>
<div class="t" style="left:1574px;top:1213.68px;font-size:24px;color:#337ab7;"><svg class="rs" viewBox="0 0 13 17"><use href="#r"/></svg>0.00</div>
<div class="t" style="left:1958px;top:1213.68px;font-size:24px;color:#337ab7;">0</div>
<div class="t" style="left:2237px;top:1213.68px;font-size:24px;color:#337ab7;"><svg class="rs" viewBox="0 0 13 17"><use href="#r"/></svg>0.00</div>
<div class="t" style="left:2649px;top:1213.68px;font-size:24px;color:#337ab7;">1</div>
<div class="t" style="left:2796px;top:1213.68px;font-size:24px;color:#337ab7;"><svg class="rs" viewBox="0 0 13 17"><use href="#r"/></svg>30000</div>
<div class="t" style="left:538px;top:1279.68px;font-size:24px;color:#333;">8</div>
<div class="t" style="left:608px;top:1279.68px;font-size:24px;color:#337ab7;">Aug,2023</div>
<div class="t" style="left:767px;top:1279.68px;font-size:24px;color:#337ab7;">2</div>
<div class="t" style="left:986px;top:1279.68px;font-size:24px;color:#337ab7;"><svg class="rs" viewBox="0 0 13 17"><use href="#r"/></svg>50000.00</div>
<div class="t" style="left:1324px;top:1279.68px;font-size:24px;color:#337ab7;">0</div>
<div class="t" style="left:1574px;top:1279.68px;font-size:24px;color:#337ab7;"><svg class="rs" viewBox="0 0 13 17"><use href="#r"/></svg>0.00</div>
<div class="t" style="left:1958px;top:1279.68px;font-size:24px;color:#337ab7;">0</div>
<div class="t" style="left:2237px;top:1279.68px;font-size:24px;color:#337ab7;"><svg class="rs" viewBox="0 0 13 17"><use href="#r"/></svg>0.00</div>
<div class="t" style="left:2649px;top:1279.68px;font-size:24px;color:#337ab7;">2</div>
<div class="t" style="left:2796px;top:1279.68px;font-size:24px;color:#337ab7;"><svg class="rs" viewBox="0 0 13 17"><use href="#r"/></svg>50000</div>
<div class="t" style="left:538px;top:1345.68px;font-size:24px;color:#333;">9</div>
<div class="t" style="left:608px;top:1345.68px;font-size:24px;color:#337ab7;">Sep,2023</div>
<div class="t" style="left:767px;top:1345.68px;font-size:24px;color:#337ab7;">2</div>
<div class="t" style="left:986px;top:1345.68px;font-size:24px;color:#337ab7;"><svg class="rs" viewBox="0 0 13 17"><use href="#r"/></svg>60000.00</div>
<div class="t" style="left:1324px;top:1345.68px;font-size:24px;color:#337ab7;">0</div>
<div class="t" style="left:1574px;top:1345.68px;font-size:24px;color:#337ab7;"><svg class="rs" viewBox="0 0 13 17"><use href="#r"/></svg>0.00</div>
<div class="t" style="left:1958px;top:1345.68px;font-size:24px;color:#337ab7;">0</div>
<div class="t" style="left:2237px;top:1345.68px;font-size:24px;color:#337ab7;"><svg class="rs" viewBox="0 0 13 17"><use href="#r"/></svg>0.00</div>
<div class="t" style="left:2649px;top:1345.68px;font-size:24px;color:#337ab7;">2</div>
<div class="t" style="left:2796px;top:1345.68px;font-size:24px;color:#337ab7;"><svg class="rs" viewBox="0 0 13 17"><use href="#r"/></svg>60000</div>
<div class="t" style="left:538px;top:1411.68px;font-size:24px;color:#333;">10</div>
<div class="t" style="left:608px;top:1411.68px;font-size:24px;color:#337ab7;">Oct,2023</div>
<div class="t" style="left:767px;top:1411.68px;font-size:24px;color:#337ab7;">0</div>
<div class="t" style="left:986px;top:1411.68px;font-size:24px;color:#337ab7;"><svg class="rs" viewBox="0 0 13 17"><use href="#r"/></svg>0</div>
<div class="t" style="left:1324px;top:1411.68px;font-size:24px;color:#337ab7;">0</div>
<div class="t" style="left:1574px;top:1411.68px;font-size:24px;color:#337ab7;"><svg class="rs" viewBox="0 0 13 17"><use href="#r"/></svg>0</div>
<div class="t" style="left:1958px;top:1411.68px;font-size:24px;color:#337ab7;">0</div>
<div class="t" style="left:2237px;top:1411.68px;font-size:24px;color:#337ab7;"><svg class="rs" viewBox="0 0 13 17"><use href="#r"/></svg>0</div>
<div class="t" style="left:2649px;top:1411.68px;font-size:24px;color:#337ab7;">0</div>
<div class="t" style="left:2796px;top:1411.68px;font-size:24px;color:#337ab7;"><svg class="rs" viewBox="0 0 13 17"><use href="#r"/></svg>0</div>
<div class="t" style="left:538px;top:1477.68px;font-size:24px;color:#333;">11</div>
<div class="t" style="left:608px;top:1477.68px;font-size:24px;color:#337ab7;">Nov,2023</div>
<div class="t" style="left:767px;top:1477.68px;font-size:24px;color:#337ab7;">0</div>
<div class="t" style="left:986px;top:1477.68px;font-size:24px;color:#337ab7;"><svg class="rs" viewBox="0 0 13 17"><use href="#r"/></svg>0</div>
<div class="t" style="left:1324px;top:1477.68px;font-size:24px;color:#337ab7;">0</div>
<div class="t" style="left:1574px;top:1477.68px;font-size:24px;color:#337ab7;"><svg class="rs" viewBox="0 0 13 17"><use href="#r"/></svg>0</div>
<div class="t" style="left:1958px;top:1477.68px;font-size:24px;color:#337ab7;">0</div>
<div class="t" style="left:2237px;top:1477.68px;font-size:24px;color:#337ab7;"><svg class="rs" viewBox="0 0 13 17"><use href="#r"/></svg>0</div>
<div class="t" style="left:2649px;top:1477.68px;font-size:24px;color:#337ab7;">0</div>
<div class="t" style="left:2796px;top:1477.68px;font-size:24px;color:#337ab7;"><svg class="rs" viewBox="0 0 13 17"><use href="#r"/></svg>0</div>
<div class="t" style="left:538px;top:1543.68px;font-size:24px;color:#333;">12</div>
<div class="t" style="left:608px;top:1543.68px;font-size:24px;color:#337ab7;">Dec,2023</div>
<div class="t" style="left:767px;top:1543.68px;font-size:24px;color:#337ab7;">0</div>
<div class="t" style="left:986px;top:1543.68px;font-size:24px;color:#337ab7;"><svg class="rs" viewBox="0 0 13 17"><use href="#r"/></svg>0</div>
<div class="t" style="left:1324px;top:1543.68px;font-size:24px;color:#337ab7;">0</div>
<div class="t" style="left:1574px;top:1543.68px;font-size:24px;color:#337ab7;"><svg class="rs" viewBox="0 0 13 17"><use href="#r"/></svg>0</div>
<div class="t" style="left:1958px;top:1543.68px;font-size:24px;color:#337ab7;">0</div>
<div class="t" style="left:2237px;top:1543.68px;font-size:24px;color:#337ab7;"><svg class="rs" viewBox="0 0 13 17"><use href="#r"/></svg>0</div>
<div class="t" style="left:2649px;top:1543.68px;font-size:24px;color:#337ab7;">0</div>
<div class="t" style="left:2796px;top:1543.68px;font-size:24px;color:#337ab7;"><svg class="rs" viewBox="0 0 13 17"><use href="#r"/></svg>0</div>
<div class="t" style="left:591px;width:141px;text-align:right;top:1609.68px;font-size:24px;font-weight:bold;color:#333;">Total</div>
<div class="t" style="left:767px;top:1609.68px;font-size:24px;color:#333;font-weight:bold;">15</div>
<div class="t" style="left:986px;top:1609.68px;font-size:24px;color:#333;font-weight:bold;"><svg class="rsb" style="margin-right:0" viewBox="0 0 13 17"><use href="#rb"/></svg>386000.00</div>
<div class="t" style="left:1324px;top:1609.68px;font-size:24px;color:#333;font-weight:bold;">0</div>
<div class="t" style="left:1574px;top:1609.68px;font-size:24px;color:#333;font-weight:bold;"><svg class="rsb" style="margin-right:0" viewBox="0 0 13 17"><use href="#rb"/></svg>0.00</div>
<div class="t" style="left:1958px;top:1609.68px;font-size:24px;color:#333;font-weight:bold;">0</div>
<div class="t" style="left:2237px;top:1609.68px;font-size:24px;color:#333;font-weight:bold;"><svg class="rsb" style="margin-right:0" viewBox="0 0 13 17"><use href="#rb"/></svg>0.00</div>
<div class="t" style="left:2649px;top:1609.68px;font-size:24px;color:#333;font-weight:bold;">15</div>
<div class="t" style="left:2796px;top:1609.68px;font-size:24px;color:#333;font-weight:bold;"><svg class="rsb" style="margin-right:0" viewBox="0 0 13 17"><use href="#rb"/></svg>386000.00</div>
</body></html>
